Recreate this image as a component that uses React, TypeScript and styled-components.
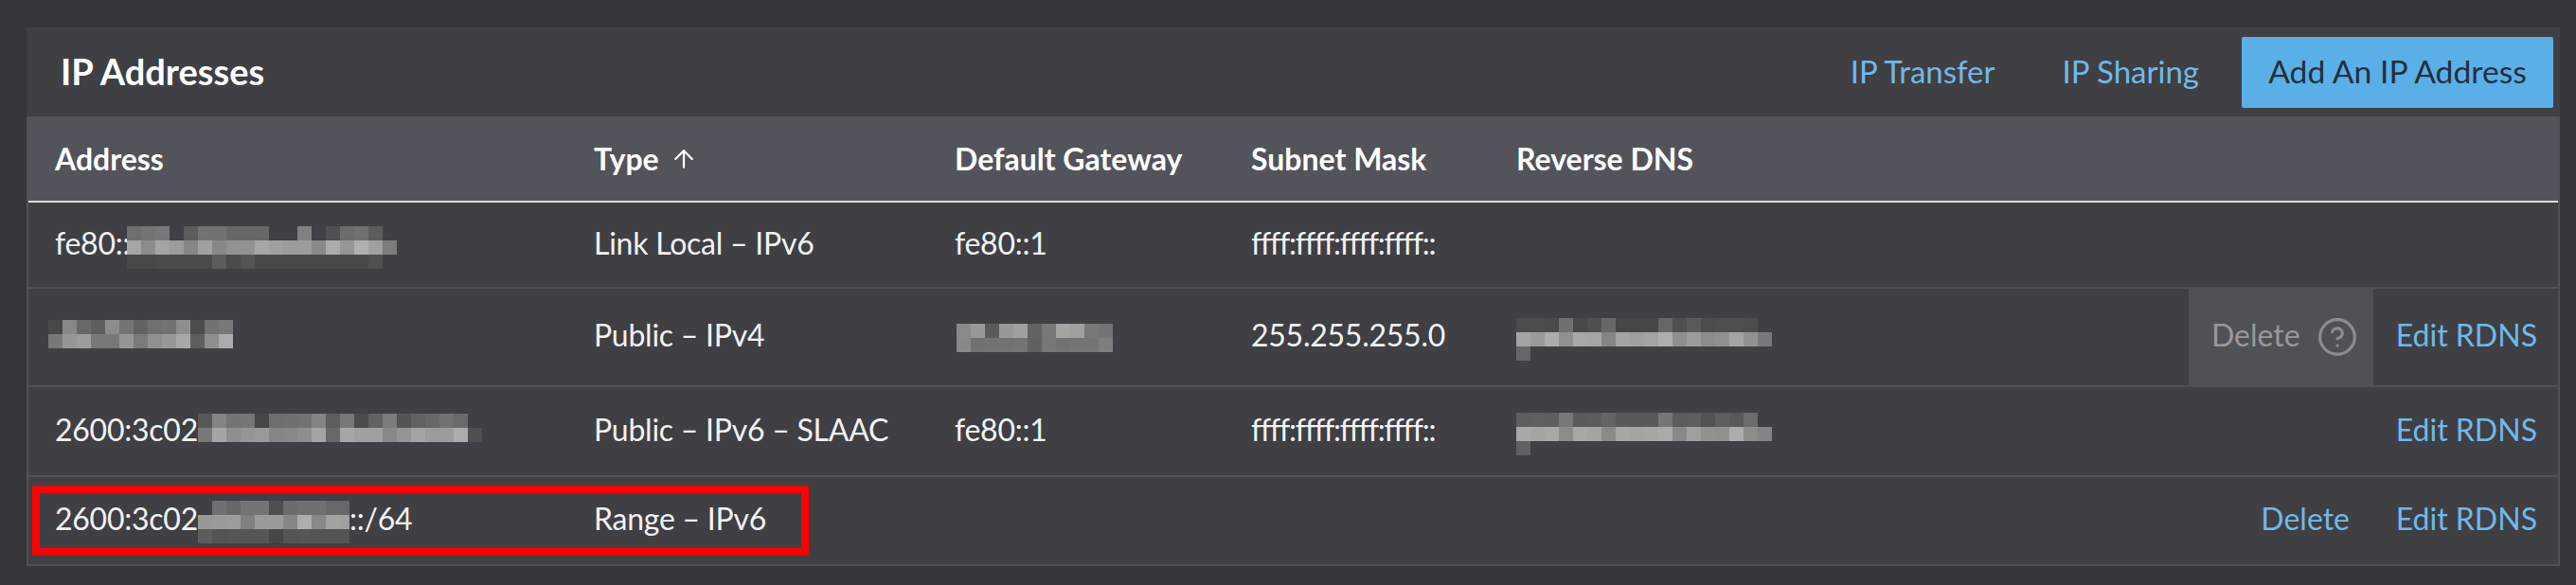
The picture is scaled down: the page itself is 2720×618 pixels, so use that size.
import React from "react";
import styled, { createGlobalStyle } from "styled-components";
import { ArrowUp, CircleHelp } from "lucide-react";

const GlobalStyle = createGlobalStyle`
  html, body {
    margin: 0;
    background: #36363a;
  }
`;

const CELL = 15;

interface MosaicProps {
  rows: string[];
  clip?: number;
  gap?: number;
  dy?: number;
}

// redacted text in the screenshot: a grid of grey blocks, ".." is an empty block
const Mosaic = ({ rows, clip, gap = 0, dy = 0 }: MosaicProps) => {
  const cols = rows[0].split(" ").length;
  const width = clip ?? cols * CELL;
  const height = rows.length * CELL;
  return (
    <MosaicSvg
      width={width}
      height={height}
      viewBox={`0 0 ${width} ${height}`}
      $h={height}
      $gap={gap}
      $dy={dy}
    >
      {rows.map((row, r) =>
        row.split(" ").map((c, i) =>
          c === ".." ? null : (
            <rect
              key={`${r}-${i}`}
              x={i * CELL}
              y={r * CELL}
              width={CELL}
              height={CELL}
              fill={`#${c}${c}${c}`}
            />
          )
        )
      )}
    </MosaicSvg>
  );
};

const MosaicSvg = styled.svg<{ $h: number; $gap: number; $dy: number }>`
  flex-shrink: 0;
  filter: blur(0.7px);
  margin-left: ${(p) => p.$gap}px;
  margin-top: ${(p) => -p.$h / 2 + p.$dy + 2.5}px;
  margin-bottom: ${(p) => -p.$h / 2 - p.$dy - 2.5}px;
`;

const Page = styled.div`
  padding: 29px 17px 20px 28px;
  font-family: "Lato", "Liberation Sans", sans-serif;
  font-size: 32px;
  color: #f2f2f3;
`;

const Card = styled.section`
  position: relative;
  background: #3f3f44;
`;

const Header = styled.header`
  height: 94px;
  box-sizing: border-box;
  display: flex;
  align-items: center;
  justify-content: space-between;
  padding: 0 7px 0 36px;
`;

const Title = styled.h2`
  margin: 0 0 3px;
  font-size: 38px;
  font-weight: 700;
  color: #ffffff;
`;

const HeaderActions = styled.div`
  display: flex;
  align-items: center;
  gap: 71px;
`;

const TextLink = styled.a`
  color: #70b9e8;
  white-space: nowrap;
`;

const HeaderLink = styled(TextLink)`
  font-size: 33px;
  margin-bottom: 3px;
`;

const AddButton = styled.button`
  width: 329px;
  height: 75px;
  margin-left: -26px;
  border: 0;
  border-radius: 2px;
  background: #5aafe7;
  color: #23303c;
  font: inherit;
  font-size: 33.7px;
  padding: 0 0 3px;
`;

const Table = styled.table`
  width: 100%;
  table-layout: fixed;
  border-collapse: separate;
  border-spacing: 0;
  border-left: 2px solid #505056;
  border-right: 2px solid #505056;
`;

const HeadRow = styled.tr`
  height: 91px;
  background: #53535b;
`;

const HeadCell = styled.th`
  box-sizing: border-box;
  padding: 0 0 0 28px;
  text-align: left;
  font-weight: 700;
  color: #ffffff;
  border-bottom: 2px solid #dedee0;
  white-space: nowrap;
`;

const SortLabel = styled.span`
  display: inline-flex;
  align-items: center;
  gap: 11px;
`;

const Row = styled.tr<{ $height: number }>`
  height: ${(p) => p.$height}px;
`;

const Cell = styled.td`
  box-sizing: border-box;
  padding: 0 0 5px 28px;
  border-bottom: 2px solid #505056;
  white-space: nowrap;
  letter-spacing: -0.25px;
`;

const CellLine = styled.div`
  display: flex;
  align-items: center;
`;

const Mask = styled.span`
  letter-spacing: -1.2px;
`;

const DisabledCell = styled.td`
  box-sizing: border-box;
  padding: 0 16px 5px 24px;
  background: #505057;
  border-bottom: 2px solid #505056;
  color: #98989c;
`;

const DisabledLine = styled.div`
  display: flex;
  align-items: center;
  justify-content: space-between;
`;

const HelpIcon = styled(CircleHelp)`
  margin: -4px 0 -9px;
  color: #8c8c90;
`;

const ActionCell = styled.td<{ $edge?: boolean }>`
  box-sizing: border-box;
  padding: 0 ${(p) => (p.$edge ? 22 : 25)}px 5px 0;
  text-align: right;
  border-bottom: 2px solid #505056;
`;

const Highlight = styled.div`
  position: absolute;
  left: 6px;
  top: 484px;
  width: 820px;
  height: 74px;
  box-sizing: border-box;
  border: 8px solid #ff0000;
  border-radius: 2px;
  pointer-events: none;
`;

const m1 = [
  "6e 74 78 .. 5c 72 72 68 68 68 .. .. 80 .. 50 6c 70 5c ..",
  "a6 8c a4 9c 86 a0 88 92 92 a6 a0 9c 9c 8a ac 96 b0 a0 7c",
  "48 48 4a 4a 4a 4a 5c 4a 54 48 48 48 48 48 48 48 48 50 ..",
];
const m2 = [
  "48 88 68 5e 8c 74 62 70 72 8e 4c 72 78",
  "78 96 9c 78 78 96 7a 90 98 a8 5e 8e ac",
];
const m3 = [
  "58 84 74 76 46 6e 70 72 84 5e 78 4a 62 7c 54 62 68 72 6a ..",
  "78 a4 8e 96 9a 86 88 8e a4 68 a6 a0 a0 88 94 a4 9c 9c ac 50",
];
const m4 = [
  ".. 70 68 74 74 4e 6c 70 70 68 68",
  "98 9a 9c 80 9a 9a 86 ae 88 a2 a0",
  "5c 54 56 56 56 46 54 56 54 54 54",
];
const gateway = [
  "8a 98 5a 98 a0 62 78 a4 a0 78 74",
  "88 70 72 72 74 60 78 72 74 74 7e",
];
const rdns1 = [
  "4c 4c 4a 70 48 50 68 46 46 46 66 50 5a 4c 4e 4e 4c ..",
  "a4 9a ac 90 a8 a6 84 a4 a0 a4 ae 90 9c 8c 90 a4 92 78",
  "66 .. .. .. .. .. .. .. .. .. .. .. .. .. .. .. .. ..",
];
const rdns2 = [
  "5e 60 5e 78 5a 5c 64 58 58 58 76 5c 5e 52 5e 58 6c ..",
  "a8 a4 a8 8c a8 a4 8a a6 a4 a6 aa 88 a0 92 90 ac 8c 84",
  "60 .. .. .. .. .. .. .. .. .. .. .. .. .. .. .. .. ..",
];

const App = () => {
  return (
    <Page>
      <GlobalStyle />
      <Card>
        <Header>
          <Title>IP Addresses</Title>
          <HeaderActions>
            <HeaderLink>IP Transfer</HeaderLink>
            <HeaderLink>IP Sharing</HeaderLink>
            <AddButton>Add An IP Address</AddButton>
          </HeaderActions>
        </Header>
        <Table>
          <colgroup>
            <col style={{ width: 569 }} />
            <col style={{ width: 381 }} />
            <col style={{ width: 313 }} />
            <col style={{ width: 280 }} />
            <col />
            <col style={{ width: 195 }} />
            <col style={{ width: 195 }} />
          </colgroup>
          <thead>
            <HeadRow>
              <HeadCell>Address</HeadCell>
              <HeadCell>
                <SortLabel>
                  Type <ArrowUp size={30} strokeWidth={1.8} />
                </SortLabel>
              </HeadCell>
              <HeadCell>Default Gateway</HeadCell>
              <HeadCell>Subnet Mask</HeadCell>
              <HeadCell colSpan={3}>Reverse DNS</HeadCell>
            </HeadRow>
          </thead>
          <tbody>
            <Row $height={91}>
              <Cell>
                <CellLine>
                  fe80::
                  <Mosaic rows={m1} gap={-3} dy={3} />
                </CellLine>
              </Cell>
              <Cell>Link Local – IPv6</Cell>
              <Cell>fe80::1</Cell>
              <Cell>
                <Mask>ffff:ffff:ffff:ffff::</Mask>
              </Cell>
              <Cell colSpan={3} />
            </Row>
            <Row $height={104}>
              <Cell>
                <CellLine>
                  <Mosaic rows={m2} gap={-7} dy={-3} />
                </CellLine>
              </Cell>
              <Cell>Public – IPv4</Cell>
              <Cell>
                <CellLine>
                  <Mosaic rows={gateway} gap={2} dy={1} />
                </CellLine>
              </Cell>
              <Cell>255.255.255.0</Cell>
              <Cell>
                <CellLine>
                  <Mosaic rows={rdns1} dy={2} />
                </CellLine>
              </Cell>
              <DisabledCell>
                <DisabledLine>
                  Delete <HelpIcon size={44} strokeWidth={1.7} />
                </DisabledLine>
              </DisabledCell>
              <ActionCell $edge>
                <TextLink>Edit RDNS</TextLink>
              </ActionCell>
            </Row>
            <Row $height={95}>
              <Cell>
                <CellLine>
                  2600:3c02
                  <Mosaic rows={m3} dy={-4} />
                </CellLine>
              </Cell>
              <Cell>Public – IPv6 – SLAAC</Cell>
              <Cell>fe80::1</Cell>
              <Cell>
                <Mask>ffff:ffff:ffff:ffff::</Mask>
              </Cell>
              <Cell>
                <CellLine>
                  <Mosaic rows={rdns2} dy={3} />
                </CellLine>
              </Cell>
              <Cell />
              <ActionCell $edge>
                <TextLink>Edit RDNS</TextLink>
              </ActionCell>
            </Row>
            <Row $height={94}>
              <Cell>
                <CellLine>
                  2600:3c02
                  <Mosaic rows={m4} clip={160} dy={1} />
                  ::/64
                </CellLine>
              </Cell>
              <Cell>Range – IPv6</Cell>
              <Cell />
              <Cell />
              <Cell />
              <ActionCell>
                <TextLink>Delete</TextLink>
              </ActionCell>
              <ActionCell $edge>
                <TextLink>Edit RDNS</TextLink>
              </ActionCell>
            </Row>
          </tbody>
        </Table>
        <Highlight />
      </Card>
    </Page>
  );
};

export default App;
